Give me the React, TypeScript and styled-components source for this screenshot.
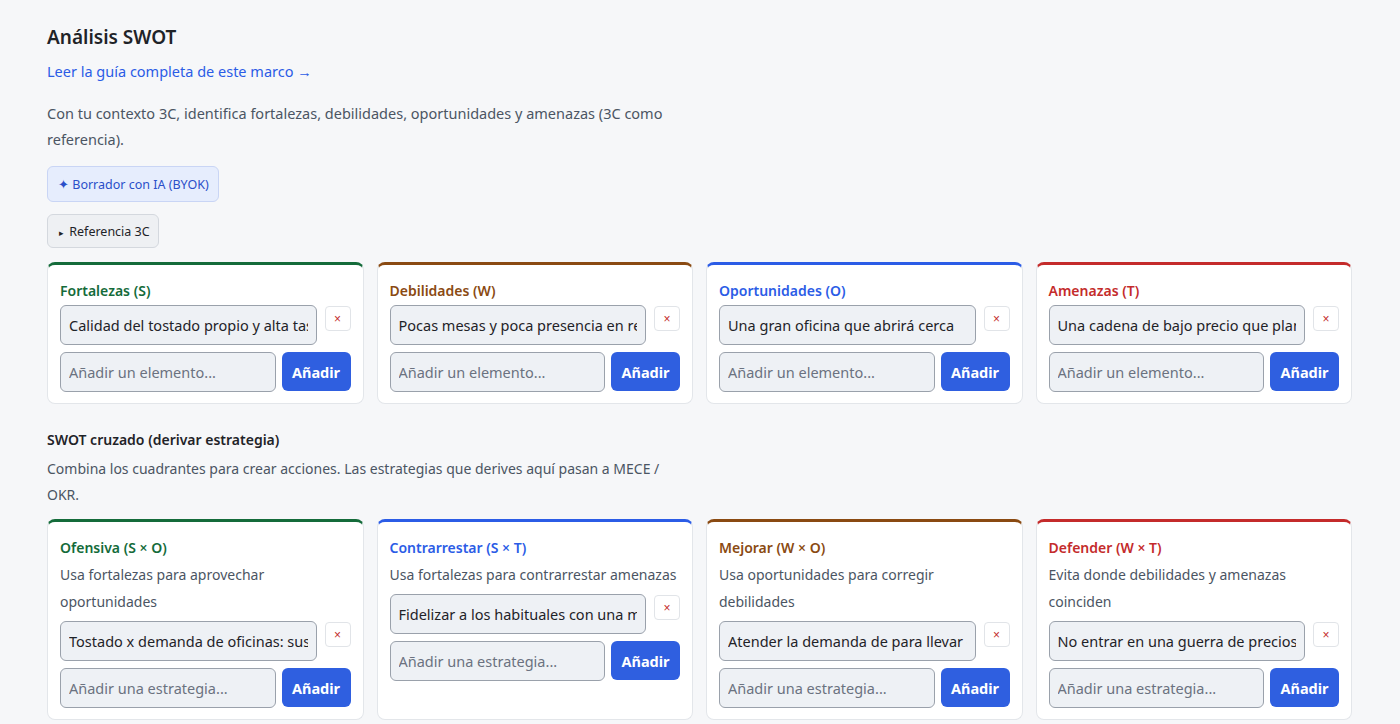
import styled, { createGlobalStyle } from "styled-components";

// COLORS
const colors = {
  page: "#f6f7f9",
  text: "#1f2328",
  muted: "#4b5563",
  link: "#2b5ce6",
  primary: "#2f5fe0",
  border: "#e3e6ea",
  inputBg: "#eef1f5",
  inputBorder: "#9aa1ab",
  green: "#146b3a",
  brown: "#8a4a12",
  blue: "#2b5ce6",
  red: "#c42b2b",
};

type Tone = "green" | "brown" | "blue" | "red";

interface IQuadrant {
  title: string;
  tone: Tone;
  hint?: string;
  items: string[];
  placeholder: string;
}

const quadrants: IQuadrant[] = [
  { title: "Fortalezas (S)", tone: "green", items: ["Calidad del tostado propio y alta tasa de repetición"], placeholder: "Añadir un elemento..." },
  { title: "Debilidades (W)", tone: "brown", items: ["Pocas mesas y poca presencia en redes sociales"], placeholder: "Añadir un elemento..." },
  { title: "Oportunidades (O)", tone: "blue", items: ["Una gran oficina que abrirá cerca"], placeholder: "Añadir un elemento..." },
  { title: "Amenazas (T)", tone: "red", items: ["Una cadena de bajo precio que planea abrir"], placeholder: "Añadir un elemento..." },
];

const strategies: IQuadrant[] = [
  { title: "Ofensiva (S × O)", tone: "green", hint: "Usa fortalezas para aprovechar oportunidades", items: ["Tostado x demanda de oficinas: suscripción de café"], placeholder: "Añadir una estrategia..." },
  { title: "Contrarrestar (S × T)", tone: "blue", hint: "Usa fortalezas para contrarrestar amenazas", items: ["Fidelizar a los habituales con una membresía"], placeholder: "Añadir una estrategia..." },
  { title: "Mejorar (W × O)", tone: "brown", hint: "Usa oportunidades para corregir debilidades", items: ["Atender la demanda de para llevar de las oficinas"], placeholder: "Añadir una estrategia..." },
  { title: "Defender (W × T)", tone: "red", hint: "Evita donde debilidades y amenazas coinciden", items: ["No entrar en una guerra de precios"], placeholder: "Añadir una estrategia..." },
];

function QuadrantCard({ quadrant }: { quadrant: IQuadrant }) {
  return (
    <Card $tone={quadrant.tone}>
      <CardTitle $tone={quadrant.tone}>{quadrant.title}</CardTitle>
      {quadrant.hint && <Hint>{quadrant.hint}</Hint>}
      {quadrant.items.map((item) => (
        <ItemRow key={item}>
          <Field defaultValue={item} />
          <RemoveButton aria-label="Eliminar">×</RemoveButton>
        </ItemRow>
      ))}
      <AddRow>
        <Field placeholder={quadrant.placeholder} />
        <AddButton>Añadir</AddButton>
      </AddRow>
    </Card>
  );
}

export default function App() {
  return (
    <>
      <GlobalStyle />
      <Page>
        <Title>Análisis SWOT</Title>
        <GuideLink href="#">Leer la guía completa de este marco →</GuideLink>
        <Intro>
          Con tu contexto 3C, identifica fortalezas, debilidades, oportunidades y amenazas (3C como
          referencia).
        </Intro>
        <Actions>
          <DraftButton>✦ Borrador con IA (BYOK)</DraftButton>
          <ToggleButton>
            <Caret>▸</Caret> Referencia 3C
          </ToggleButton>
        </Actions>
        <Grid>
          {quadrants.map((q) => (
            <QuadrantCard key={q.title} quadrant={q} />
          ))}
        </Grid>
        <SectionTitle>SWOT cruzado (derivar estrategia)</SectionTitle>
        <SectionText>
          Combina los cuadrantes para crear acciones. Las estrategias que derives aquí pasan a MECE /
          OKR.
        </SectionText>
        <Grid>
          {strategies.map((q) => (
            <QuadrantCard key={q.title} quadrant={q} />
          ))}
        </Grid>
      </Page>
    </>
  );
}

// STYLED COMPONENTS
const GlobalStyle = createGlobalStyle`
  * { box-sizing: border-box; }
  body {
    margin: 0;
    background: ${colors.page};
    color: ${colors.text};
    font-family: "Noto Sans", "Open Sans", sans-serif;
  }
`;

const Page = styled.main`
  display: flex;
  flex-direction: column;
  align-items: flex-start;
  padding: 22px 48px 40px 47px;
`;

const Title = styled.h1`
  font-size: 19px;
  font-weight: 600;
  margin: 0 0 9px;
  line-height: 30px;
`;

const GuideLink = styled.a`
  color: ${colors.link};
  font-size: 14.5px;
  text-decoration: none;
  line-height: 20px;
`;

const Intro = styled.p`
  color: ${colors.muted};
  font-size: 14.5px;
  line-height: 26px;
  margin: 19px 0 14px;
  max-width: 640px;
`;

const Actions = styled.div`
  display: flex;
  flex-direction: column;
  align-items: flex-start;
  gap: 12px;
  margin-bottom: 14px;
`;

const DraftButton = styled.button`
  background: #e6edfd;
  border: 1px solid #c9d5f5;
  border-radius: 6px;
  color: #2a4fc9;
  font-family: inherit;
  font-size: 12.5px;
  height: 36px;
  padding: 0 9px 0 10px;
`;

const ToggleButton = styled.button`
  background: #eef0f3;
  border: 1px solid #d4d8de;
  border-radius: 6px;
  color: ${colors.text};
  font-family: inherit;
  font-size: 12.5px;
  height: 34px;
  padding: 0 8px 0 11px;
`;

const Caret = styled.span`
  font-size: 9px;
  margin-right: 2px;
`;

const Grid = styled.div`
  display: grid;
  grid-template-columns: repeat(4, minmax(0, 1fr));
  gap: 13px;
  width: 100%;
  align-items: stretch;
`;

const Card = styled.section<{ $tone: Tone }>`
  background: #fff;
  border: 1px solid ${colors.border};
  border-top: 3px solid ${(p) => colors[p.$tone]};
  border-radius: 8px;
  padding: 16px 12px 11px;
  display: flex;
  flex-direction: column;
`;

const CardTitle = styled.h3<{ $tone: Tone }>`
  color: ${(p) => colors[p.$tone]};
  font-size: 14px;
  font-weight: 600;
  line-height: 20px;
  margin: 0 0 4px;
`;

const Hint = styled.p`
  color: ${colors.muted};
  font-size: 14px;
  line-height: 27px;
  margin: -1px 0 6px;
`;

const ItemRow = styled.div`
  display: flex;
  align-items: flex-start;
  gap: 8px;
  margin-bottom: 7px;
`;

const AddRow = styled.div`
  display: flex;
  gap: 6px;
`;

const Field = styled.input`
  flex: 1;
  min-width: 0;
  height: 40px;
  background: ${colors.inputBg};
  border: 1px solid ${colors.inputBorder};
  border-radius: 6px;
  padding: 0 8px;
  font-family: inherit;
  font-size: 14.5px;
  color: ${colors.text};
  &::placeholder {
    color: #6b7280;
  }
`;

const RemoveButton = styled.button`
  width: 26px;
  height: 25px;
  margin-top: 1px;
  background: #fff;
  border: 1px solid #e1e4e8;
  border-radius: 4px;
  color: ${colors.red};
  font-size: 12px;
  line-height: 1;
  padding: 0;
`;

const AddButton = styled.button`
  width: 69px;
  height: 39px;
  background: ${colors.primary};
  border: none;
  border-radius: 6px;
  color: #fff;
  font-family: inherit;
  font-size: 14.5px;
  font-weight: 700;
`;

const SectionTitle = styled.h2`
  font-size: 14px;
  font-weight: 600;
  line-height: 20px;
  margin: 26px 0 6px;
`;

const SectionText = styled.p`
  color: ${colors.muted};
  font-size: 14px;
  line-height: 26px;
  margin: 0 0 11px;
  max-width: 640px;
`;
